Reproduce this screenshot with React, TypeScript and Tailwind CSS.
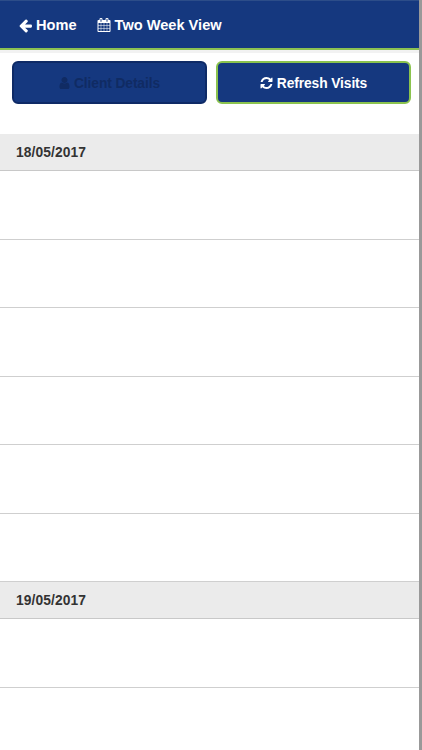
import type { ReactNode } from 'react';

const ARROW =
  'M1664 896v128q0 53-32.5 90.5t-84.5 37.5h-704l293 294q38 36 38 90t-38 90l-75 76q-37 37-90 37-52 0-91-37l-651-652q-37-37-37-90 0-52 37-91l651-650q38-38 91-38 52 0 90 38l75 74q38 38 38 91t-38 91l-293 293h704q52 0 84.5 37.5t32.5 90.5z';
const CALENDAR =
  'M192 1664h288v-288h-288v288zm352 0h320v-288h-320v288zm-352-352h288v-320h-288v320zm352 0h320v-320h-320v320zm-352-384h288v-288h-288v288zm736 736h320v-288h-320v288zm-384-736h320v-288h-320v288zm768 736h288v-288h-288v288zm-384-352h320v-320h-320v320zm-352-864v-288q0-13-9.5-22.5t-22.5-9.5h-64q-13 0-22.5 9.5t-9.5 22.5v288q0 13 9.5 22.5t22.5 9.5h64q13 0 22.5-9.5t9.5-22.5zm736 864h288v-320h-288v320zm-384-384h320v-288h-320v288zm384 0h288v-288h-288v288zm32-480v-288q0-13-9.5-22.5t-22.5-9.5h-64q-13 0-22.5 9.5t-9.5 22.5v288q0 13 9.5 22.5t22.5 9.5h64q13 0 22.5-9.5t9.5-22.5zm384-64v1280q0 52-38 90t-90 38h-1408q-52 0-90-38t-38-90v-1280q0-52 38-90t90-38h128v-96q0-66 47-113t113-47h64q66 0 113 47t47 113v96h384v-96q0-66 47-113t113-47h64q66 0 113 47t47 113v96h128q52 0 90 38t38 90z';
const USER =
  'M1536 1399q0 109-62.5 187t-150.5 78h-854q-88 0-150.5-78t-62.5-187q0-85 8.5-160.5t31.5-152 58.5-131 94-89 134.5-34.5q131 128 313 128t313-128q76 0 134.5 34.5t94 89 58.5 131 31.5 152 8.5 160.5zm-256-887q0 159-112.5 271.5t-271.5 112.5-271.5-112.5-112.5-271.5 112.5-271.5 271.5-112.5 271.5 112.5 112.5 271.5z';
const REFRESH =
  'M1639 1056q0 5-1 7-64 268-268 434.5t-478 166.5q-146 0-282.5-55t-243.5-157l-129 129q-19 19-45 19t-45-19-19-45v-448q0-26 19-45t45-19h448q26 0 45 19t19 45-19 45l-137 137q71 66 161 102t187 36q134 0 250-65t186-179q11-17 53-117 8-23 30-23h192q13 0 22.5 9.5t9.5 22.5zm25-800v448q0 26-19 45t-45 19h-448q-26 0-45-19t-19-45 19-45l138-138q-148-137-349-137-134 0-250 65t-186 179q-11 17-53 117-8 23-30 23h-199q-13 0-22.5-9.5t-9.5-22.5v-7q65-268 270-434.5t480-166.5q146 0 284 55.5t245 156.5l130-129q19-19 45-19t45 19 19 45z';

function Icon({ path, viewBox = '0 0 1792 1792', className }: { path: string; viewBox?: string; className: string }) {
  return (
    <svg viewBox={viewBox} className={`shrink-0 fill-current ${className}`} aria-hidden="true">
      <path d={path} />
    </svg>
  );
}

function DayHeader({ children }: { children: ReactNode }) {
  return (
    <h2 className="flex h-[37px] shrink-0 items-center border-b border-[#c8c8c8] bg-[#ebebeb] pt-0.5 pl-4 text-[13.8px] font-bold tracking-[0.1px] text-[#333333]">
      {children}
    </h2>
  );
}

function VisitRows({ count }: { count: number }) {
  return (
    <ul className="shrink-0">
      {Array.from({ length: count }, (_, i) => (
        <li key={i} className="h-[68.5px] border-b border-[#cfcfcf] bg-white" />
      ))}
    </ul>
  );
}

export default function App() {
  return (
    <div className="flex h-[750px] w-[422px] overflow-hidden bg-white font-['Liberation_Sans',Arial,sans-serif]">
      <div className="flex min-w-0 flex-1 flex-col overflow-hidden">
        <header className="flex h-[50px] shrink-0 items-center border-t border-b-2 border-t-[#2c4d89] border-b-[#8cc152] bg-[#15387f] pt-0.5 pl-[19px] text-[14.6px] font-bold text-white">
          <a className="flex items-center">
            <Icon path={ARROW} viewBox="128 0 1536 1792" className="mr-1 h-[15px] w-[13px]" />
            <span>Home</span>
          </a>
          <a className="ml-5 flex items-center">
            <Icon path={CALENDAR} className="mr-1 size-[14px]" />
            <span>Two Week View</span>
          </a>
        </header>
        <div className="h-[3px] shrink-0 bg-[#f2f2f2]" />
        <div className="flex h-[81px] shrink-0 gap-[9px] pt-2 pr-[7px] pl-3">
          <button className="flex h-[43px] w-[195px] items-center justify-center rounded-[6px] border-2 border-[#0e2a66] bg-[#15387f] pt-px text-[13.8px] font-bold tracking-[-0.1px] text-[#102b63]">
            <Icon path={USER} viewBox="256 0 1280 1792" className="mr-1 h-[14px] w-[11px]" />
            <span className="pt-0.5">Client Details</span>
          </button>
          <button className="flex h-[43px] w-[195px] items-center justify-center rounded-[6px] border-2 border-[#8bc34e] bg-[#15387f] pt-px text-[13.8px] font-bold tracking-[-0.1px] text-white">
            <Icon path={REFRESH} viewBox="128 0 1536 1792" className="mr-1 h-[14px] w-[13px]" />
            <span className="pt-0.5">Refresh Visits</span>
          </button>
        </div>
        <DayHeader>18/05/2017</DayHeader>
        <VisitRows count={6} />
        <DayHeader>19/05/2017</DayHeader>
        <VisitRows count={2} />
      </div>
      <div className="w-[3px] shrink-0 bg-[#999999]" />
    </div>
  );
}
